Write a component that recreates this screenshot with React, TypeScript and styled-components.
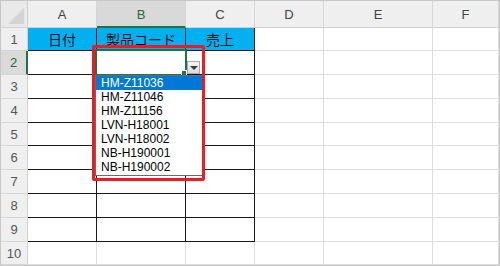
import React from 'react'
import styled, { createGlobalStyle } from 'styled-components'

const GlobalStyle = createGlobalStyle`
  html, body {
    margin: 0;
    padding: 0;
    background: #fff;
  }
  body {
    font-family: "Liberation Sans", Arial, sans-serif;
  }
`

const colWidths = [27, 69, 89, 69, 69, 109]
const rowHeights = [27, 23, 24, 24, 24, 23, 24, 24, 24, 24]
const letters = ['A', 'B', 'C', 'D', 'E', 'F']
const heads = ['日付', '製品コード', '売上']
const codes = [
  'HM-Z11036',
  'HM-Z11046',
  'HM-Z11156',
  'LVN-H18001',
  'LVN-H18002',
  'NB-H190001',
  'NB-H190002',
]

const Sheet = styled.div`
  box-sizing: border-box;
  width: 500px;
  height: 266px;
  border: 1px solid #c6c6c6;
  overflow: hidden;
  display: grid;
  grid-template-columns: ${colWidths.map(w => `${w}px`).join(' ')} 1fr;
  grid-template-rows: ${rowHeights.map(h => `${h}px`).join(' ')} 1fr;
  background: #fff;
`

const Corner = styled.div`
  position: relative;
  box-sizing: border-box;
  background: #e9e9e9;
  border-right: 1px solid #d2d2d2;
  border-bottom: 1px solid #d2d2d2;

  &::after {
    content: '';
    position: absolute;
    right: 3px;
    bottom: 3px;
    border-left: 16px solid transparent;
    border-bottom: 16px solid #d4d4d4;
  }
`

const ColHeader = styled.div<{ $selected?: boolean }>`
  box-sizing: border-box;
  display: flex;
  align-items: center;
  justify-content: center;
  background: ${p => (p.$selected ? '#d9d9d9' : '#efefef')};
  color: ${p => (p.$selected ? '#1e6b41' : '#444')};
  font-size: 13px;
  border-right: 1px solid #d6d6d6;
  border-bottom: ${p => (p.$selected ? '2px solid #217346' : '1px solid #d2d2d2')};
  padding-top: ${p => (p.$selected ? '1px' : '0')};
`

const RowHeader = styled.div<{ $selected?: boolean }>`
  box-sizing: border-box;
  display: flex;
  align-items: center;
  justify-content: center;
  background: ${p => (p.$selected ? '#dadada' : '#efefef')};
  color: ${p => (p.$selected ? '#1e6b41' : '#555')};
  font-size: 13px;
  border-bottom: 1px solid #d6d6d6;
  border-right: ${p => (p.$selected ? '2px solid #217346' : '1px solid #d2d2d2')};
`

const Cell = styled.div<{ $table?: boolean; $head?: boolean; $active?: boolean }>`
  position: ${p => (p.$active ? 'relative' : 'static')};
  z-index: ${p => (p.$active ? 2 : 'auto')};
  box-sizing: border-box;
  display: flex;
  align-items: center;
  justify-content: center;
  background: ${p => (p.$head ? '#00b0f0' : '#fff')};
  color: #111;
  font-family: "Noto Sans CJK JP", "Liberation Sans", sans-serif;
  font-size: 14px;
  border-right: 1px solid ${p => (p.$table ? '#1a1a1a' : '#dedede')};
  border-bottom: 1px solid ${p => (p.$table ? '#1a1a1a' : '#dedede')};
`

/* overlays anchored to the active cell B2 */
const Selection = styled.div`
  position: absolute;
  left: -2px;
  top: -2px;
  width: 92px;
  height: 27px;
  box-sizing: border-box;
  border: 2px solid #217346;
`

const FillHandle = styled.div`
  position: absolute;
  left: 84px;
  top: 19px;
  width: 6px;
  height: 6px;
  box-sizing: border-box;
  background: #217346;
  border: 1px solid #fff;
`

const DropButton = styled.div`
  position: absolute;
  left: 90px;
  top: 10px;
  width: 13px;
  height: 13px;
  box-sizing: border-box;
  background: linear-gradient(#f6f6f6, #dadada);
  border: 1px solid #a9a9a9;
  display: flex;
  align-items: center;
  justify-content: center;

  &::after {
    content: '';
    border-left: 4px solid transparent;
    border-right: 4px solid transparent;
    border-top: 4px solid #3a3a3a;
    margin-top: 1px;
  }
`

const ListBox = styled.ul`
  position: absolute;
  left: -2px;
  top: 24px;
  width: 108px;
  height: 101px;
  box-sizing: border-box;
  margin: 0;
  padding: 0;
  list-style: none;
  background: #fff;
  border: 1px solid #6b6b6b;
  font-family: "Liberation Sans", Arial, sans-serif;
`

const ListItem = styled.li<{ $active?: boolean }>`
  height: 14px;
  line-height: 14px;
  padding-left: 5px;
  font-size: 12px;
  color: ${p => (p.$active ? '#fff' : '#000')};
  background: ${p => (p.$active ? '#0078d7' : 'transparent')};
  white-space: nowrap;
`

const Callout = styled.div`
  position: absolute;
  left: -5px;
  top: -6px;
  width: 113px;
  height: 136px;
  box-sizing: border-box;
  border: 3px solid #ec1c24;
  border-radius: 2px;
  pointer-events: none;
`

function Dropdown() {
  return (
    <>
      <Selection />
      <FillHandle />
      <DropButton />
      <ListBox>
        {codes.map((code, i) => (
          <ListItem key={code} $active={i === 0}>
            {code}
          </ListItem>
        ))}
      </ListBox>
      <Callout />
    </>
  )
}

export default function App() {
  const cells: React.ReactNode[] = []

  cells.push(<Corner key="corner" />)
  letters.forEach((l, i) => {
    cells.push(
      <ColHeader key={`h${l}`} $selected={i === 1}>
        {l}
      </ColHeader>,
    )
  })

  for (let r = 1; r <= 10; r++) {
    cells.push(
      <RowHeader key={`r${r}`} $selected={r === 2}>
        {r}
      </RowHeader>,
    )
    letters.forEach((l, c) => {
      const active = r === 2 && c === 1
      cells.push(
        <Cell
          key={`${l}${r}`}
          $table={r <= 9 && c < 3}
          $head={r === 1 && c < 3}
          $active={active}
        >
          {r === 1 && c < 3 ? heads[c] : null}
          {active && <Dropdown />}
        </Cell>,
      )
    })
  }

  return (
    <>
      <GlobalStyle />
      <Sheet>{cells}</Sheet>
    </>
  )
}
